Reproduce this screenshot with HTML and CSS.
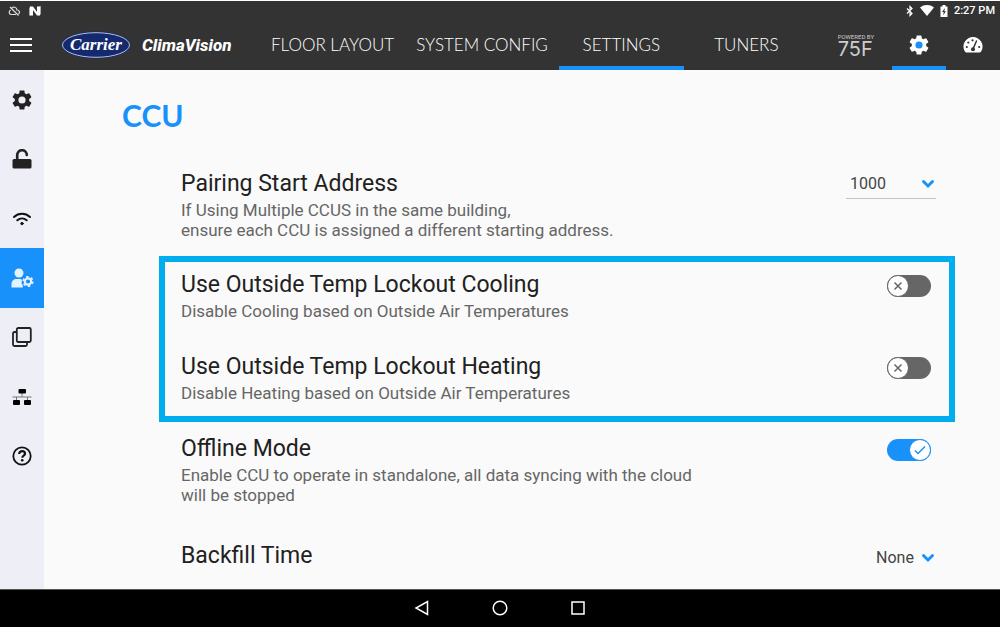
FILE: index.html
```html
<!DOCTYPE html>
<html lang="en">
<head>
    <meta charset="UTF-8">
    <meta name="viewport" content="width=device-width, initial-scale=1.0">
    <title>CCU Settings</title>
    <link rel="stylesheet" href="styles.css">
</head>
<body>
    <div class="status-bar">
        <div class="status-group">
            <svg width="12" height="10" viewBox="0 0 12 10" fill="none" stroke="#ddd" stroke-width="1.2"><path d="M3.5 2.5A3 3 0 0 1 9 4a2.2 2.2 0 0 1 1.5 4M8 8.5H3A2.3 2.3 0 0 1 3 4M2 1l8.5 8.5"/></svg>
            <svg width="12" height="10" viewBox="0 0 12 10"><path d="M0 9.5V2l1.5-1.5v9zM10.5 9.5V.5L12 0v8z" fill="#aaa"/><path d="M1 .5h3L8 6V.5h3v9H8L4 4v5.5H1z" fill="#fff"/></svg>
        </div>
        <div class="status-group status-right">
            <svg width="8" height="12" viewBox="0 0 8 12" fill="none" stroke="#fff" stroke-width="1.2"><path d="M1 3.5l5 5-2 2v-9l2 2-5 5"/></svg>
            <svg width="14" height="11" viewBox="0 0 14 11"><path d="M0 2.5C4-.8 10-.8 14 2.5L7 11z" fill="#fff"/></svg>
            <svg width="8" height="12" viewBox="0 0 8 12"><path d="M.5 1.5h2V0h3v1.5h2V12h-7z" fill="#fff"/><path d="M5 3L2 7h1.7l-.5 3.3L6 6.3H4.3z" fill="#333"/></svg>
            <span class="clock">2:27 PM</span>
        </div>
    </div>

    <header class="header">
        <button class="menu-btn" aria-label="Menu"><span></span><span></span><span></span></button>
        <div class="brand">
            <svg width="70" height="28" viewBox="0 0 70 28">
                <ellipse cx="35" cy="14" rx="34.5" ry="13.5" fill="#15296f"/>
                <ellipse cx="35" cy="14" rx="33.5" ry="12.3" fill="none" stroke="#dfe4f5" stroke-width=".8"/>
                <text x="35" y="19" text-anchor="middle" class="carrier">Carrier</text>
            </svg>
            <span class="product">ClimaVision</span>
        </div>
        <nav class="tabs">
            <a href="#" class="tab">FLOOR LAYOUT</a>
            <a href="#" class="tab">SYSTEM CONFIG</a>
            <a href="#" class="tab active">SETTINGS</a>
            <a href="#" class="tab">TUNERS</a>
        </nav>
        <div class="header-right">
            <div class="powered">
                <span class="powered-by">POWERED BY</span>
                <span class="powered-name">75F</span>
            </div>
            <a href="#" class="icon-tab active" aria-label="Settings">
                <svg width="24" height="24" viewBox="0 0 24 24"><circle cx="12" cy="12" r="5" fill="#1991fa"/><path fill="#fff" d="M19.14 12.94c.04-.3.06-.61.06-.94s-.02-.64-.07-.94l2.03-1.58a.49.49 0 0 0 .12-.61l-1.92-3.32a.488.488 0 0 0-.59-.22l-2.39.96c-.5-.38-1.03-.7-1.62-.94l-.36-2.54a.484.484 0 0 0-.48-.41h-3.84c-.24 0-.43.17-.47.41l-.36 2.54c-.59.24-1.13.57-1.62.94l-2.39-.96c-.22-.08-.47 0-.59.22L2.74 8.87c-.12.21-.08.47.12.61l2.03 1.58c-.05.3-.09.63-.09.94s.02.64.07.94l-2.03 1.58a.49.49 0 0 0-.12.61l1.92 3.32c.12.22.37.29.59.22l2.39-.96c.5.38 1.03.7 1.62.94l.36 2.54c.05.24.24.41.48.41h3.84c.24 0 .44-.17.47-.41l.36-2.54c.59-.24 1.13-.56 1.62-.94l2.39.96c.22.08.47 0 .59-.22l1.92-3.32c.12-.22.07-.47-.12-.61zM12 15.6A3.6 3.6 0 1 1 12 8.4a3.6 3.6 0 0 1 0 7.2z"/></svg>
            </a>
            <a href="#" class="icon-tab" aria-label="Dashboard">
                <svg width="20" height="18" viewBox="0 0 20 18"><path fill="#fff" d="M10 1a9.5 9.5 0 0 0-8.6 13.6c.4 1 1 1.9 1.8 1.9h13.6c.8 0 1.4-.9 1.8-1.9A9.5 9.5 0 0 0 10 1z"/><g fill="#333"><circle cx="3.8" cy="11" r="1.1"/><circle cx="5.3" cy="6.5" r="1.1"/><circle cx="9.5" cy="4.3" r="1.1"/><circle cx="16.2" cy="11" r="1.1"/><circle cx="10" cy="13.3" r="2"/></g><path d="M10 13l3.5-8" stroke="#333" stroke-width="1.5" stroke-linecap="round"/></svg>
            </a>
        </div>
    </header>

    <div class="layout">
        <nav class="sidebar">
            <a href="#" aria-label="General">
                <svg width="24" height="24" viewBox="0 0 24 24"><path fill="#222" d="M19.14 12.94c.04-.3.06-.61.06-.94s-.02-.64-.07-.94l2.03-1.58a.49.49 0 0 0 .12-.61l-1.92-3.32a.488.488 0 0 0-.59-.22l-2.39.96c-.5-.38-1.03-.7-1.62-.94l-.36-2.54a.484.484 0 0 0-.48-.41h-3.84c-.24 0-.43.17-.47.41l-.36 2.54c-.59.24-1.13.57-1.62.94l-2.39-.96c-.22-.08-.47 0-.59.22L2.74 8.87c-.12.21-.08.47.12.61l2.03 1.58c-.05.3-.09.63-.09.94s.02.64.07.94l-2.03 1.58a.49.49 0 0 0-.12.61l1.92 3.32c.12.22.37.29.59.22l2.39-.96c.5.38 1.03.7 1.62.94l.36 2.54c.05.24.24.41.48.41h3.84c.24 0 .44-.17.47-.41l.36-2.54c.59-.24 1.13-.56 1.62-.94l2.39.96c.22.08.47 0 .59-.22l1.92-3.32c.12-.22.07-.47-.12-.61zM12 15.6A3.6 3.6 0 1 1 12 8.4a3.6 3.6 0 0 1 0 7.2z"/></svg>
            </a>
            <a href="#" aria-label="Security">
                <svg width="20" height="20" viewBox="0 0 20 20"><rect x=".5" y="10" width="19" height="9.5" rx="1.5" fill="#222"/><path d="M5.2 11V6a4.8 4.8 0 0 1 9.6 0" fill="none" stroke="#222" stroke-width="2.6" stroke-linecap="round"/></svg>
            </a>
            <a href="#" aria-label="Wi-Fi">
                <svg width="20" height="16" viewBox="0 0 20 16" fill="none" stroke="#111" stroke-width="2" stroke-linecap="round"><path d="M2 6c4.6-4.2 11.4-4.2 16 0M5.3 9.3c2.8-2.4 6.6-2.4 9.4 0"/><circle cx="10" cy="12.6" r="1.2" fill="#111" stroke-width="1"/></svg>
            </a>
            <a href="#" class="active" aria-label="CCU">
                <svg width="24" height="20" viewBox="0 0 24 20"><g fill="#e4f1ff"><circle cx="9" cy="5" r="4.5"/><path d="M1.500 19.5V16c0-3 2.3-5 5-5H11l1 1.5-.5 2.500 1.5 3-.5 1.5z"/></g><g fill="none" stroke="#e4f1ff"><circle cx="18" cy="13.5" r="3.2" stroke-width="2.2"/><circle cx="18" cy="13.5" r="4.7" stroke-width="1.8" stroke-dasharray="2.4 2.52"/></g></svg>
            </a>
            <a href="#" aria-label="Layouts">
                <svg width="20" height="20" viewBox="0 0 20 20" fill="none" stroke="#222" stroke-width="1.8"><rect x="4.8" y="1" width="14" height="14" rx="1.5"/><path d="M4.8 5H2.5A1.5 1.5 0 0 0 1 6.5v11A1.5 1.5 0 0 0 2.5 19h11a1.5 1.5 0 0 0 1.5-1.5V15"/></svg>
            </a>
            <a href="#" aria-label="Network">
                <svg width="20" height="18" viewBox="0 0 20 18"><path d="M.5 9h19M10 5v4M4.500 9v3M15.500 9v3" fill="none" stroke="#777" stroke-width="1"/><rect x="6.5" y="1" width="7.5" height="4.5" rx="1"/><rect x="1" y="12" width="7" height="5" rx="1"/><rect x="12" y="12" width="7" height="5" rx="1"/></svg>
            </a>
            <a href="#" aria-label="Help">
                <svg width="20" height="20" viewBox="0 0 20 20" fill="none" stroke="#111"><circle cx="10" cy="10" r="8.7" stroke-width="1.8"/><path d="M7.2 7.9C7.2 4.2 13 4.5 13 7.7c0 2-2.7 2-2.7 4" stroke-width="2.2"/><circle cx="10.2" cy="14.2" r="1.3" fill="#111" stroke="none"/></svg>
            </a>
        </nav>

        <main class="content">
            <h1>CCU</h1>

            <div class="row">
                <div class="row-text">
                    <label class="row-title" for="address">Pairing Start Address</label>
                    <p>If Using Multiple CCUS in the same building,<br>ensure each CCU is assigned a different starting address.</p>
                </div>
                <div class="select underlined">
                    <select id="address"><option>1000</option></select>
                    <svg width="14" height="10" viewBox="0 0 14 10"><path d="M2.5 2.5L7 7l4.5-4.5"/></svg>
                </div>
            </div>

            <div class="highlight">
                <div class="row">
                    <div class="row-text">
                        <label class="row-title" for="cooling">Use Outside Temp Lockout Cooling</label>
                        <p>Disable Cooling based on Outside Air Temperatures</p>
                    </div>
                    <div class="switch">
                        <input type="checkbox" id="cooling">
                        <svg width="22" height="22" viewBox="0 0 20 20"><path d="M6.5 6.5l7 7M13.5 6.5l-7 7"/></svg>
                    </div>
                </div>
                <div class="row">
                    <div class="row-text">
                        <label class="row-title" for="heating">Use Outside Temp Lockout Heating</label>
                        <p>Disable Heating based on Outside Air Temperatures</p>
                    </div>
                    <div class="switch">
                        <input type="checkbox" id="heating">
                        <svg width="22" height="22" viewBox="0 0 20 20"><path d="M6.5 6.5l7 7M13.5 6.5l-7 7"/></svg>
                    </div>
                </div>
            </div>

            <div class="row">
                <div class="row-text">
                    <label class="row-title" for="offline">Offline Mode</label>
                    <p>Enable CCU to operate in standalone, all data syncing with the cloud<br>will be stopped</p>
                </div>
                <div class="switch on">
                    <input type="checkbox" id="offline" checked>
                    <svg width="22" height="22" viewBox="0 0 20 20"><path d="M5 10.5l3 3 7-7"/></svg>
                </div>
            </div>

            <div class="row backfill">
                <div class="row-text">
                    <label class="row-title" for="backfill">Backfill Time</label>
                </div>
                <div class="select compact">
                    <select id="backfill"><option>None</option></select>
                    <svg width="14" height="10" viewBox="0 0 14 10"><path d="M2.5 2.5L7 7l4.5-4.5"/></svg>
                </div>
            </div>
        </main>
    </div>

    <footer class="nav-bar">
        <button aria-label="Back"><svg width="16" height="16" viewBox="0 0 16 16"><path d="M13.5 1.5v13L2 8z"/></svg></button>
        <button aria-label="Home"><svg width="16" height="16" viewBox="0 0 16 16"><circle cx="8" cy="8" r="6.8"/></svg></button>
        <button aria-label="Recent apps"><svg width="16" height="16" viewBox="0 0 16 16"><rect x="2" y="2" width="12" height="12"/></svg></button>
    </footer>
</body>
</html>
```
FILE: styles.css
```css
* {
    box-sizing: border-box;
}
body {
    margin: 0;
    min-height: 100vh;
    display: flex;
    flex-direction: column;
    border-top: 1px solid #fff;
    background: #fafafa;
    font-family: Roboto, sans-serif;
    color: #212121;
}
a {
    color: inherit;
    text-decoration: none;
}
button {
    padding: 0;
    border: none;
    background: none;
    cursor: pointer;
}
svg {
    display: block;
    flex: none;
}

/* status bar */
.status-bar {
    display: flex;
    justify-content: space-between;
    align-items: center;
    height: 19px;
    padding: 0 5px 0 8px;
    background: #333;
    color: #fff;
}
.status-group {
    display: flex;
    align-items: center;
    gap: 9px;
}
.status-right {
    gap: 6px;
}
.clock {
    font-size: 11px;
    font-weight: 500;
}

/* header */
.header {
    display: flex;
    height: 50px;
    background: #333;
    color: #fff;
}
.menu-btn {
    display: flex;
    flex-direction: column;
    justify-content: center;
    gap: 4px;
    width: 61px;
    padding-left: 10px;
}
.menu-btn span {
    width: 22px;
    height: 2px;
    background: #fff;
}
.brand {
    display: flex;
    align-items: center;
    gap: 11px;
    width: 199px;
}
.carrier {
    font: italic 700 17px "Liberation Serif", serif;
    fill: #fff;
}
.product {
    font-size: 17px;
    font-weight: 800;
    font-style: italic;
}
.tabs {
    display: flex;
}
.tab {
    min-width: 125px;
    padding: 4px 11px 0;
    border-bottom: 4px solid transparent;
    font-family: Lato, sans-serif;
    font-size: 17px;
    font-weight: 300;
    line-height: 42px;
    text-align: center;
    white-space: nowrap;
}
.tab.active,
.icon-tab.active {
    border-bottom-color: #1991fa;
}
.header-right {
    display: flex;
    margin-left: auto;
}
.powered {
    display: flex;
    flex-direction: column;
    justify-content: center;
    margin-right: 18px;
    color: #ccc;
}
.powered-by {
    font-size: 6px;
    line-height: 8px;
}
.powered-name {
    font-family: Inter, sans-serif;
    font-size: 20px;
    line-height: 16px;
}
.icon-tab {
    display: flex;
    align-items: center;
    justify-content: center;
    width: 54px;
    padding-top: 3px;
    border-bottom: 4px solid transparent;
}

/* sidebar */
.layout {
    flex: 1;
    display: flex;
}
.sidebar {
    display: flex;
    flex-direction: column;
    width: 44px;
    padding-bottom: 103px;
    background: #eeeef7;
}
.sidebar a {
    flex: 1;
    display: flex;
    align-items: center;
    justify-content: center;
}
.sidebar a.active {
    background: #1991fa;
}

/* content */
.content {
    flex: 1;
    padding: 25px 45px 16px 115px;
}
h1 {
    margin: 0 0 33px -37px;
    font-family: Lato, sans-serif;
    font-size: 30px;
    font-weight: 700;
    line-height: 40px;
    color: #1991fa;
}
.row {
    display: flex;
    justify-content: space-between;
    align-items: flex-start;
    padding: 0 24px 0 22px;
}
.row-title {
    display: block;
    font-size: 23px;
    line-height: 32px;
}
.row p {
    margin: 0;
    font-size: 17px;
    line-height: 20px;
    color: #666;
}
.highlight {
    display: flex;
    flex-direction: column;
    gap: 30px;
    margin: 16px 0 11px;
    padding: 7px 0 13px;
    border: 6px solid #00aeef;
}
.highlight .row {
    padding: 0 18px 0 16px;
}
.backfill {
    margin-top: 35px;
}

/* controls */
.select {
    position: relative;
    width: 90px;
    margin-right: -5px;
}
.select.compact {
    width: 60px;
    margin-top: 2px;
}
.select select {
    appearance: none;
    width: 100%;
    height: 31px;
    padding: 0 4px;
    border: none;
    background: none;
    font-family: Roboto, sans-serif;
    font-size: 16px;
    color: #444;
}
.select.compact select {
    padding: 0;
}
.select.underlined select {
    border-bottom: 1px solid #c4c4c4;
}
.select svg {
    position: absolute;
    right: 1px;
    top: 11px;
    pointer-events: none;
    fill: none;
    stroke: #1991fa;
    stroke-width: 3;
    stroke-linecap: round;
}
.switch {
    position: relative;
    width: 44px;
    height: 22px;
    margin-top: 6px;
}
.switch input {
    appearance: none;
    display: block;
    width: 44px;
    height: 22px;
    margin: 0;
    border-radius: 11px;
    background: #666;
}
.switch input:checked {
    background: #1991fa;
}
.switch svg {
    position: absolute;
    left: 0;
    top: 0;
    border: 1px solid #666;
    border-radius: 11px;
    background: #fff;
    pointer-events: none;
    fill: none;
    stroke: #666;
    stroke-width: 1.5;
}
.switch.on svg {
    left: 22px;
    border-color: #1991fa;
    stroke: #1991fa;
}

/* bottom bar */
.nav-bar {
    display: flex;
    justify-content: center;
    align-items: center;
    gap: 62px;
    height: 38px;
    padding-bottom: 1px;
    border-top: 1px solid #555;
    background: #000;
}
.nav-bar svg {
    fill: none;
    stroke: #fff;
    stroke-width: 1.5;
}
```
